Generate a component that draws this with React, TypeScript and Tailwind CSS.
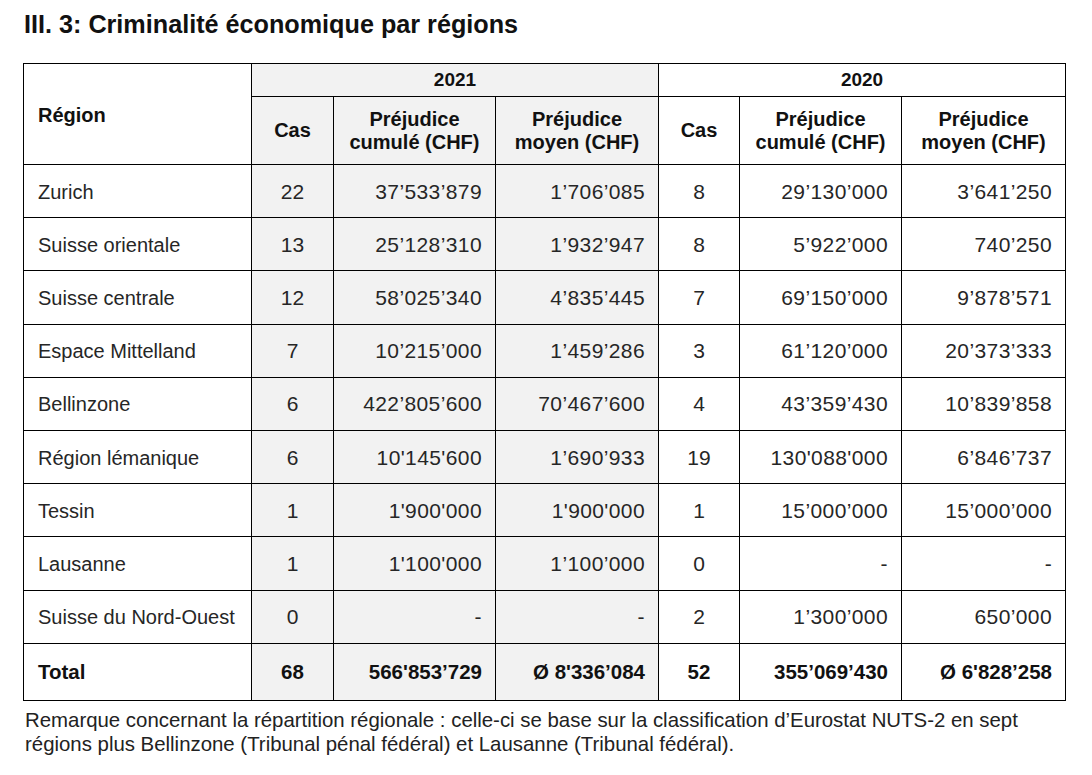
import React from 'react';

type Row = {
  region: string;
  c21: string;
  cum21: string;
  moy21: string;
  c20: string;
  cum20: string;
  moy20: string;
};

const rows: Row[] = [
  { region: 'Zurich', c21: '22', cum21: '37’533’879', moy21: '1’706’085', c20: '8', cum20: '29’130’000', moy20: '3’641’250' },
  { region: 'Suisse orientale', c21: '13', cum21: '25’128’310', moy21: '1’932’947', c20: '8', cum20: '5’922’000', moy20: '740’250' },
  { region: 'Suisse centrale', c21: '12', cum21: '58’025’340', moy21: '4’835’445', c20: '7', cum20: '69’150’000', moy20: '9’878’571' },
  { region: 'Espace Mittelland', c21: '7', cum21: '10’215’000', moy21: '1’459’286', c20: '3', cum20: '61’120’000', moy20: '20’373’333' },
  { region: 'Bellinzone', c21: '6', cum21: '422’805’600', moy21: '70’467’600', c20: '4', cum20: '43’359’430', moy20: '10’839’858' },
  { region: 'Région lémanique', c21: '6', cum21: "10'145'600", moy21: '1’690’933', c20: '19', cum20: "130'088'000", moy20: '6’846’737' },
  { region: 'Tessin', c21: '1', cum21: "1'900'000", moy21: "1'900'000", c20: '1', cum20: '15’000’000', moy20: '15’000’000' },
  { region: 'Lausanne', c21: '1', cum21: "1'100'000", moy21: '1’100’000', c20: '0', cum20: '-', moy20: '-' },
  { region: 'Suisse du Nord-Ouest', c21: '0', cum21: '-', moy21: '-', c20: '2', cum20: '1’300’000', moy20: '650’000' },
];

const App: React.FC = () => {
  // shared cell styles
  const cell = 'border border-black align-middle';
  const gray = 'bg-[#f2f2f2]';
  const num = 'text-right pr-[13px] text-[21px] tracking-[0.4px]';
  const cas = 'text-center text-[21px]';
  const tot = 'text-right pr-[13px] text-[20.5px]';

  return (
    <div className="w-[1092px] h-[775px] bg-white font-['Liberation_Sans',Arial,sans-serif] text-[#262626]">
      <h1 className="pt-[9px] pl-6 text-[25.2px] leading-[30px] font-bold text-[#111]">
        III. 3: Criminalité économique par régions
      </h1>

      <table className="mt-[24px] ml-[23px] w-[1042px] table-fixed border-collapse">
        <colgroup>
          <col className="w-[228px]" />
          <col className="w-[82px]" />
          <col className="w-[162px]" />
          <col className="w-[163px]" />
          <col className="w-[81px]" />
          <col className="w-[162px]" />
          <col className="w-[164px]" />
        </colgroup>
        <thead className="text-[20px] font-bold text-[#111]">
          <tr className="h-[33px]">
            <th rowSpan={2} className={`${cell} text-left pl-[14px] pt-[2px]`}>
              Région
            </th>
            <th colSpan={3} className={`${cell} ${gray} text-center text-[19px]`}>
              2021
            </th>
            <th colSpan={3} className={`${cell} text-center text-[19px]`}>
              2020
            </th>
          </tr>
          <tr className="h-[68px] leading-[23px]">
            <th className={`${cell} ${gray} text-center`}>Cas</th>
            <th className={`${cell} ${gray} text-center`}>
              Préjudice
              <br />
              cumulé (CHF)
            </th>
            <th className={`${cell} ${gray} text-center`}>
              Préjudice
              <br />
              moyen (CHF)
            </th>
            <th className={`${cell} text-center`}>Cas</th>
            <th className={`${cell} text-center`}>
              Préjudice
              <br />
              cumulé (CHF)
            </th>
            <th className={`${cell} text-center`}>
              Préjudice
              <br />
              moyen (CHF)
            </th>
          </tr>
        </thead>
        <tbody className="leading-[24px]">
          {rows.map((r) => (
            <tr key={r.region} className="h-[53.2px]">
              <td className={`${cell} pl-[14px] pt-[1px] text-[20px]`}>{r.region}</td>
              <td className={`${cell} ${gray} ${cas} pt-[1px]`}>{r.c21}</td>
              <td className={`${cell} ${gray} ${num} pt-[1px]`}>{r.cum21}</td>
              <td className={`${cell} ${gray} ${num} pt-[1px]`}>{r.moy21}</td>
              <td className={`${cell} ${cas} pt-[1px]`}>{r.c20}</td>
              <td className={`${cell} ${num} pt-[1px]`}>{r.cum20}</td>
              <td className={`${cell} ${num} pt-[1px]`}>{r.moy20}</td>
            </tr>
          ))}
          <tr className="h-[57px] font-bold text-[#111]">
            <td className={`${cell} pl-[14px] text-[20.5px]`}>Total</td>
            <td className={`${cell} ${gray} text-center text-[20.5px]`}>68</td>
            <td className={`${cell} ${gray} ${tot}`}>566'853’729</td>
            <td className={`${cell} ${gray} ${tot}`}>Ø 8'336’084</td>
            <td className={`${cell} text-center text-[20.5px]`}>52</td>
            <td className={`${cell} ${tot}`}>355’069’430</td>
            <td className={`${cell} ${tot}`}>Ø 6'828’258</td>
          </tr>
        </tbody>
      </table>

      <p className="mt-[7px] pl-[25px] text-[20.4px] leading-[24px] text-[#222]">
        <span className="block whitespace-nowrap">
          Remarque concernant la répartition régionale : celle-ci se base sur la classification d’Eurostat NUTS-2 en sept
        </span>
        <span className="block whitespace-nowrap">
          régions plus Bellinzone (Tribunal pénal fédéral) et Lausanne (Tribunal fédéral).
        </span>
      </p>
    </div>
  );
};

export default App;
